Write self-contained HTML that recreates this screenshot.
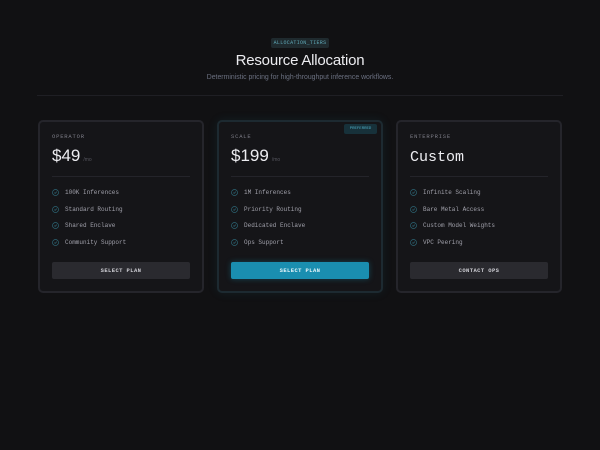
<!DOCTYPE html>
<html><head><style>
*{margin:0;padding:0;box-sizing:border-box}
body{width:600px;height:450px;background:#111113;font-family:"Liberation Sans",sans-serif;color:#e6e6ea;position:relative;overflow:hidden}
.tag{position:absolute;left:271px;top:38px;width:58px;height:10px;background:#1f2a2e;border-radius:2px;font:5px "Liberation Mono",monospace;color:#5fa9b8;text-align:center;line-height:10px;letter-spacing:.3px}
h1{position:absolute;top:52px;width:600px;text-align:center;font-size:15px;font-weight:normal;color:#ececf0;letter-spacing:-.2px}
.sub{position:absolute;top:74px;width:600px;text-align:center;font-size:6.9px;color:#6b7080}
.hr{position:absolute;left:37px;top:95px;width:526px;height:1px;background:#1f1f24}
.card{position:absolute;top:120px;width:166px;height:173px;background:#151518;border:2px solid #25252b;border-radius:5px;font-family:"Liberation Mono",monospace}
.card.s{border-color:#1d2a31;box-shadow:0 0 10px rgba(30,120,150,.12)}
.lab{position:absolute;left:12px;top:11px;font-size:5.5px;color:#7c7c86;letter-spacing:.8px}
.price{position:absolute;left:12px;top:24px;font:17px "Liberation Sans",sans-serif;color:#ececf0}
.price small{font-size:5px;color:#55555e;margin-left:3px}
.cust{font-family:"Liberation Mono",monospace;font-size:15px;top:27px}
.div{position:absolute;left:12px;right:12px;top:54px;height:1px;background:#24242a}
.f{position:absolute;left:12px;font-size:6px;color:#a0a0aa;display:flex;align-items:center}
.f svg{width:7px;height:7px;margin-right:6px}
.btn{position:absolute;left:12px;right:12px;top:140px;height:17px;background:#2a2a2f;border-radius:2px;font-size:5.5px;color:#d0d0d6;text-align:center;line-height:17px;letter-spacing:.4px;font-weight:bold}
.s .btn{background:#1a8eb0;color:#e8f6fb;box-shadow:0 0 6px rgba(26,142,176,.4)}
.pref{position:absolute;right:4px;top:2px;width:33px;height:10px;background:#17313a;border-radius:2px;font-size:4px;color:#4fb0c8;text-align:center;line-height:10px}
</style></head><body>
<svg width="0" height="0" style="position:absolute"><defs><symbol id="c" viewBox="0 0 10 10"><circle cx="5" cy="5" r="4.3" fill="none" stroke="#2c6574" stroke-width="1"/><path d="M3.2 5.1 L4.5 6.3 L6.9 3.8" fill="none" stroke="#2c6574" stroke-width="1"/></symbol></defs></svg>
<div class="tag">ALLOCATION_TIERS</div>
<h1>Resource Allocation</h1>
<div class="sub">Deterministic pricing for high-throughput inference workflows.</div>
<div class="hr"></div>

<div class="card" style="left:38px">
<div class="lab">OPERATOR</div>
<div class="price">$49<small>/mo</small></div>
<div class="div"></div>
<div class="f" style="top:67px"><svg><use href="#c"/></svg>100K Inferences</div>
<div class="f" style="top:84px"><svg><use href="#c"/></svg>Standard Routing</div>
<div class="f" style="top:100px"><svg><use href="#c"/></svg>Shared Enclave</div>
<div class="f" style="top:117px"><svg><use href="#c"/></svg>Community Support</div>
<div class="btn">SELECT PLAN</div>
</div>

<div class="card s" style="left:217px">
<div class="pref">PREFERRED</div>
<div class="lab">SCALE</div>
<div class="price">$199<small>/mo</small></div>
<div class="div"></div>
<div class="f" style="top:67px"><svg><use href="#c"/></svg>1M Inferences</div>
<div class="f" style="top:84px"><svg><use href="#c"/></svg>Priority Routing</div>
<div class="f" style="top:100px"><svg><use href="#c"/></svg>Dedicated Enclave</div>
<div class="f" style="top:117px"><svg><use href="#c"/></svg>Ops Support</div>
<div class="btn">SELECT PLAN</div>
</div>

<div class="card" style="left:396px">
<div class="lab">ENTERPRISE</div>
<div class="price cust">Custom</div>
<div class="div"></div>
<div class="f" style="top:67px"><svg><use href="#c"/></svg>Infinite Scaling</div>
<div class="f" style="top:84px"><svg><use href="#c"/></svg>Bare Metal Access</div>
<div class="f" style="top:100px"><svg><use href="#c"/></svg>Custom Model Weights</div>
<div class="f" style="top:117px"><svg><use href="#c"/></svg>VPC Peering</div>
<div class="btn">CONTACT OPS</div>
</div>
</body></html>
